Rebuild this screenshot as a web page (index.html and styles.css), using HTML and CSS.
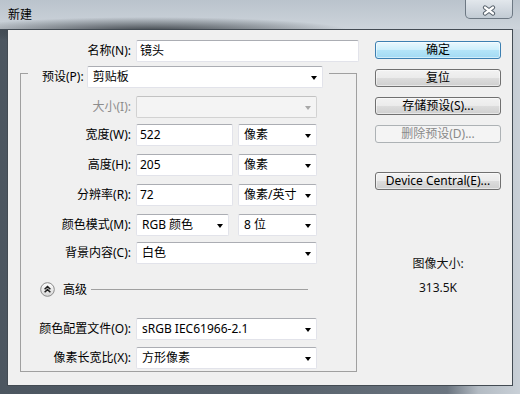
FILE: index.html
```html
<!DOCTYPE html>
<html lang="zh-CN">
<head>
    <meta charset="UTF-8">
    <meta name="viewport" content="width=device-width, initial-scale=1.0">
    <title>新建</title>
    <link rel="stylesheet" href="styles.css">
</head>
<body>
<div class="window">
    <!-- 标题栏 -->
    <div class="titlebar">
        <span class="title">新建</span>
        <button class="close-button" aria-label="关闭">
            <svg width="14" height="11" viewBox="0 0 14 11">
                <path d="M3 2.5L11 8.5M11 2.5L3 8.5" stroke="#58626c" stroke-width="4.2" stroke-linecap="round"/>
                <path d="M3 2.5L11 8.5M11 2.5L3 8.5" stroke="#fff" stroke-width="2.2" stroke-linecap="round"/>
            </svg>
        </button>
    </div>

    <div class="client">
        <!-- 左侧表单 -->
        <div class="form-col">
            <div class="field-row name-row">
                <label class="field-label">名称(N):</label>
                <div class="text-box w-name">镜头</div>
            </div>

            <fieldset class="preset-group">
                <legend class="preset-legend">
                    <label class="preset-label">预设(P):</label>
                    <div class="select-box w-preset"><span>剪贴板</span><span class="arrow"></span></div>
                </legend>

                <div class="field-row is-disabled">
                    <label class="field-label">大小(I):</label>
                    <div class="select-box w-wide"><span></span><span class="arrow"></span></div>
                </div>

                <div class="field-row row-6">
                    <label class="field-label">宽度(W):</label>
                    <div class="text-box w-num">522</div>
                    <div class="select-box w-unit"><span>像素</span><span class="arrow"></span></div>
                </div>

                <div class="field-row row-8">
                    <label class="field-label">高度(H):</label>
                    <div class="text-box w-num">205</div>
                    <div class="select-box w-unit"><span>像素</span><span class="arrow"></span></div>
                </div>

                <div class="field-row row-8">
                    <label class="field-label">分辨率(R):</label>
                    <div class="text-box w-num">72</div>
                    <div class="select-box w-unit"><span>像素/英寸</span><span class="arrow"></span></div>
                </div>

                <div class="field-row row-8">
                    <label class="field-label">颜色模式(M):</label>
                    <div class="select-box w-mode"><span>RGB 颜色</span><span class="arrow"></span></div>
                    <div class="select-box w-unit bit-select"><span>8 位</span><span class="arrow"></span></div>
                </div>

                <div class="field-row row-6">
                    <label class="field-label">背景内容(C):</label>
                    <div class="select-box w-wide"><span>白色</span><span class="arrow"></span></div>
                </div>

                <div class="advanced-row">
                    <svg width="15" height="15" viewBox="0 0 15 15">
                        <defs>
                            <linearGradient id="advBg" x1="0" y1="0" x2="0" y2="1">
                                <stop offset="0" stop-color="#ffffff"/>
                                <stop offset="1" stop-color="#d6d6d6"/>
                            </linearGradient>
                        </defs>
                        <circle cx="7.5" cy="7.5" r="6.8" fill="url(#advBg)" stroke="#8a8a8a"/>
                        <path d="M4.6 7.2L7.5 4.6L10.4 7.2M4.6 10.2L7.5 7.6L10.4 10.2" fill="none" stroke="#1e1e1e" stroke-width="1.5"/>
                    </svg>
                    <span class="advanced-text">高级</span>
                    <span class="advanced-line"></span>
                </div>

                <div class="field-row profile-row">
                    <label class="field-label">颜色配置文件(O):</label>
                    <div class="select-box w-wide"><span>sRGB IEC61966-2.1</span><span class="arrow"></span></div>
                </div>

                <div class="field-row row-7">
                    <label class="field-label">像素长宽比(X):</label>
                    <div class="select-box w-wide"><span>方形像素</span><span class="arrow"></span></div>
                </div>
            </fieldset>
        </div>

        <!-- 右侧按钮 -->
        <div class="side-col">
            <button class="btn btn-default">确定</button>
            <button class="btn">复位</button>
            <button class="btn">存储预设(S)...</button>
            <button class="btn" disabled>删除预设(D)...</button>
            <button class="btn btn-device">Device Central(E)...</button>

            <div class="image-size">
                <p>图像大小:</p>
                <p>313.5K</p>
            </div>
        </div>
    </div>
</div>
</body>
</html>
```

FILE: styles.css
```css
* {
    box-sizing: border-box;
}

html, body {
    margin: 0;
}

body {
    width: 520px;
    height: 394px;
    overflow: hidden;
    font-family: "Noto Sans", "Noto Sans CJK SC", sans-serif;
    font-size: 12px;
    line-height: 16px;
    color: #000;
}

/* 窗口边框 */
.window {
    height: 394px;
    display: flex;
    flex-direction: column;
    padding: 0 7px 8px;
    background:
        radial-gradient(ellipse 200px 14px at 150px 31px, rgba(34, 40, 46, 0.85), rgba(34, 40, 46, 0)),
        linear-gradient(to bottom, #bac3cc 0, #cdd4db 29px, transparent 29px),
        linear-gradient(to right, #4c5660 0, #58626c 55%, #6b7580 86%, #b3bbc3 92%, #c9d0d7 100%);
}

.titlebar {
    height: 29px;
    display: flex;
    justify-content: space-between;
    align-items: flex-start;
}

.title {
    padding: 7px 0 0 1px;
}

.close-button {
    width: 48px;
    height: 19px;
    padding: 3px 0 0;
    border: 1px solid #6d7883;
    border-top: none;
    border-radius: 0 0 5px 5px;
    background: linear-gradient(#e2e7ec, #c2cbd4);
    display: flex;
    justify-content: center;
    align-items: center;
}

/* 客户区 */
.client {
    flex: 1;
    display: flex;
    gap: 16px;
    background-color: #f0f0f0;
    border: 1px solid #434b53;
}

.form-col {
    width: 351px;
    padding-top: 10px;
}

.field-row {
    display: flex;
    align-items: center;
    gap: 5px;
    height: 22px;
}

.field-label {
    width: 110px;
    text-align: right;
    white-space: nowrap;
}

.name-row .field-label {
    width: 123px;
}

.text-box,
.select-box {
    height: 22px;
    display: flex;
    align-items: center;
    background-color: #fff;
    border: 1px solid #e2e3ea;
    border-top-color: #abadb3;
    border-radius: 2px;
    white-space: nowrap;
}

.text-box {
    padding: 0 3px;
}

.select-box {
    justify-content: space-between;
    padding: 0 5px;
}

.arrow {
    width: 0;
    height: 0;
    margin-top: 2px;
    border-top: 4px solid #000;
    border-left: 3px solid transparent;
    border-right: 3px solid transparent;
}

.w-name { width: 223px; }
.w-preset { width: 236px; }
.w-wide { width: 181px; }
.w-num { width: 97px; }
.w-unit { width: 79px; }
.w-mode { width: 93px; }

.bit-select {
    margin-left: 4px;
}

/* 预设分组 */
.preset-group {
    width: 337px;
    min-width: 0;
    margin: 4px 0 0 12px;
    padding: 16px 0 2px;
    border: 1px solid #a0a0a0;
}

.preset-legend {
    display: flex;
    align-items: flex-start;
    gap: 3px;
    height: 14px;
    margin-left: 7px;
    padding: 0 6px 0 14px;
}

.preset-label {
    height: 22px;
    display: flex;
    align-items: center;
}

.row-6 { margin-top: 6px; }
.row-7 { margin-top: 7px; }
.row-8 { margin-top: 8px; }

.is-disabled .field-label {
    color: #8d8d8d;
}

.is-disabled .select-box {
    background-color: #f4f4f4;
    border-color: #d2d2d2;
    border-top-color: #c2c2c2;
}

.is-disabled .arrow {
    border-top-color: #a8a8a8;
}

.advanced-row {
    display: flex;
    align-items: center;
    height: 15px;
    margin-top: 18px;
    padding-left: 19px;
}

.advanced-row svg {
    margin-right: 8px;
}

.advanced-text {
    margin-right: 4px;
}

.advanced-line {
    width: 217px;
    height: 1px;
    background-color: #a0a0a0;
}

.profile-row {
    margin-top: 21px;
}

/* 右侧按钮 */
.side-col {
    width: 126px;
    padding-top: 11px;
    display: flex;
    flex-direction: column;
    gap: 10px;
}

.btn {
    height: 18px;
    padding: 0;
    font: inherit;
    color: #000;
    border: 1px solid #707070;
    border-radius: 3px;
    background: linear-gradient(#f2f2f2 0%, #ebebeb 49%, #dddddd 50%, #cfcfcf 100%);
    box-shadow: inset 0 0 0 1px rgba(255, 255, 255, 0.5);
}

.btn-default {
    border-color: #3c7fb1;
    background: linear-gradient(#eaf8fe 0%, #cdeffc 48%, #b4e4f8 52%, #a2daf4 100%);
}

.btn:disabled {
    color: #8a8a8a;
    border-color: #adb2b5;
    background: #f4f4f4;
    box-shadow: none;
}

.btn-device {
    margin-top: 19px;
}

.image-size {
    margin-top: 56px;
    text-align: center;
    color: #111;
}

.image-size p {
    margin: 0;
}

.image-size p + p {
    margin-top: 8px;
}
```
